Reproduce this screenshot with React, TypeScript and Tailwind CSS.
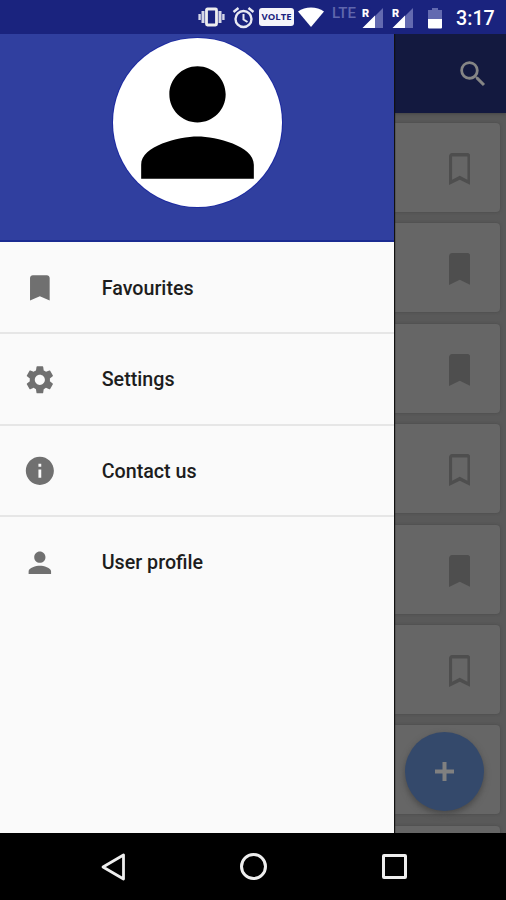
import clsx from "clsx";
import {
  MdBookmark,
  MdInfo,
  MdPerson,
  MdSearch,
  MdSettings,
} from "react-icons/md";

const menuItems = [
  { label: "Favourites", icon: MdBookmark },
  { label: "Settings", icon: MdSettings },
  { label: "Contact us", icon: MdInfo },
  { label: "User profile", icon: MdPerson },
];

const cards = [
  { id: 1, saved: false },
  { id: 2, saved: true },
  { id: 3, saved: true },
  { id: 4, saved: false },
  { id: 5, saved: true },
  { id: 6, saved: false },
];

function SignalIcon() {
  return (
    <svg className="h-[22px] w-[22px]" viewBox="0 0 22 22">
      <path d="M21 1v20H1z" fill="#636ab0" />
      <path d="M13 8.500V21H.5z" fill="#fff" />
      <path d="M0 0h8.500v9.500H0z" fill="#1a237e" />
      <text
        x="0"
        y="9.500"
        fill="#fff"
        fontSize="11"
        fontWeight="900"
        fontFamily="Roboto"
      >
        R
      </text>
    </svg>
  );
}

function StatusBar() {
  return (
    <header className="flex h-[34px] shrink-0 items-center bg-[#1a237e] pl-[198px] text-white">
      <svg className="h-[22px] w-[27px] shrink-0" viewBox="0 0 27 22">
        <rect x="8.500" y="3" width="10" height="16" rx="1" fill="none" stroke="#eee" strokeWidth="2.800" />
        <path d="M5 5v12M22 5v12" stroke="#d5d7e8" strokeWidth="3" />
        <path d="M1.600 8v6M25.400 8v6" stroke="#d5d7e8" strokeWidth="2.400" />
      </svg>
      <svg className="ml-[7px] h-[23px] w-[23px] shrink-0" viewBox="0 0 23 23" fill="none" stroke="#e8e9f3">
        <circle cx="11.500" cy="13" r="8" strokeWidth="2.400" />
        <path d="M1.500 6l5-4M21.500 6l-5-4" strokeWidth="2.400" />
        <path d="M11.500 8v5.500l4 2.500" strokeWidth="2" />
      </svg>
      <span className="ml-[4px] flex h-[18px] w-[35px] shrink-0 items-center justify-center rounded-[3px] bg-[#f5f5fa] font-['Open_Sans',sans-serif] text-[9.500px] font-bold text-[#1a237e]">
        VOLTE
      </span>
      <svg className="ml-[4px] h-[20px] w-[26px] shrink-0" viewBox="0 0 26 20">
        <path d="M0 4.500C7-1 19-1 26 4.500L13 20z" fill="#fff" />
      </svg>
      <span className="ml-[8px] w-[27px] shrink-0 pb-[7px] text-[15px] leading-none font-medium text-[#6067ad]">
        LTE
      </span>
      <div className="ml-[3px] flex shrink-0 gap-[8px] pt-px">
        <SignalIcon />
        <SignalIcon />
      </div>
      <svg className="mt-[2px] ml-[14px] h-[21px] w-[14px] shrink-0" viewBox="0 0 14 21">
        <path d="M4 0h6v2h4v9H0V2h4z" fill="#636ab0" />
        <path d="M0 11h14v8.500a1 1 0 0 1-1 1H1a1 1 0 0 1-1-1z" fill="#fff" />
      </svg>
      <span className="ml-[14px] pt-[3px] text-[19.700px] font-medium leading-none">
        3:17
      </span>
    </header>
  );
}

function Drawer() {
  return (
    <aside className="z-10 flex w-[394px] shrink-0 flex-col bg-[#fafafa] shadow-[1px_0_1px_#111]">
      <div className="flex h-[208px] shrink-0 justify-center border-b-2 border-[#1a2b91] bg-[#303f9f] pt-[4px]">
        <div className="size-[169px] rounded-full bg-white ring-1 ring-[#1c2aa0]">
          <MdPerson className="size-full text-black" />
        </div>
      </div>
      <nav className="pt-px">
        {menuItems.map(({ label, icon: Icon }, index) => (
          <a
            key={label}
            className={clsx(
              "flex h-[91.4px] items-center border-b-2 pt-px pl-[23px]",
              index < menuItems.length - 1
                ? "border-[#e6e6e6]"
                : "border-transparent",
            )}
          >
            <Icon className="size-[33.700px] text-[#707070]" />
            <span className="ml-[45px] pt-px text-[19.700px] font-medium text-[#1d1d1d]">
              {label}
            </span>
          </a>
        ))}
      </nav>
    </aside>
  );
}

function BookmarkIcon({ saved }: { saved: boolean }) {
  return (
    <svg
      className="h-[32px] w-[21.500px] text-[#4e4e4e]"
      viewBox="5 3 14 18"
      preserveAspectRatio="none"
      fill="currentColor"
    >
      {saved ? (
        <path d="M17 3H7c-1.100 0-2 .9-2 2v16l7-3 7 3V5c0-1.100-.9-2-2-2z" />
      ) : (
        <path d="M17 3H7c-1.100 0-2 .9-2 2v16l7-3 7 3V5c0-1.100-.9-2-2-2zm0 15l-5-2.180L7 18V5h10v13z" />
      )}
    </svg>
  );
}

function Content() {
  return (
    <main className="relative flex min-w-0 flex-1 flex-col overflow-hidden bg-[#595959]">
      <div className="flex h-[79px] shrink-0 items-center justify-end bg-[#13193f] pr-[16px] shadow-[0_1px_3px_#444]">
        <MdSearch className="size-[34px] text-[#858585]" />
      </div>
      <div className="flex flex-col gap-[11.400px] pt-[10px] pr-[6.500px]">
        {cards.map((card) => (
          <div
            key={card.id}
            className="flex h-[89px] shrink-0 items-center justify-end rounded-r-[4px] bg-[#666] pt-[3px] pr-[29.500px] shadow-[0_0_3px_#484848]"
          >
            <BookmarkIcon saved={card.saved} />
          </div>
        ))}
        <div className="h-[89px] shrink-0 rounded-r-[4px] bg-[#666] shadow-[0_0_3px_#484848]" />
        <div className="h-[89px] shrink-0 rounded-r-[4px] bg-[#666] shadow-[0_0_3px_#484848]" />
      </div>
      <button className="absolute right-[22px] bottom-[22.500px] flex size-[79px] items-center justify-center rounded-full bg-[#34496b] shadow-[0_3px_6px_#484848]">
        <svg className="size-[19px]" viewBox="0 0 19 19">
          <path d="M9.500 0v19M0 9.500h19" stroke="#808080" strokeWidth="4" />
        </svg>
      </button>
    </main>
  );
}

function NavigationBar() {
  return (
    <footer className="flex h-[67px] shrink-0 items-center justify-between bg-black pr-[99px] pl-[100px]">
      <svg className="size-[28px]" viewBox="0 0 28 28">
        <path d="M3 14L23.500 2v24z" fill="none" stroke="#eee" strokeWidth="2.800" strokeLinejoin="round" />
      </svg>
      <div className="mr-[4px] size-[27px] rounded-full border-3 border-[#eee]" />
      <div className="size-[25px] rounded-[2px] border-3 border-[#eee]" />
    </footer>
  );
}

export default function App() {
  return (
    <div className="flex h-[900px] w-[506px] flex-col overflow-hidden bg-black font-[Roboto,sans-serif]">
      <StatusBar />
      <div className="flex h-[799px] overflow-hidden">
        <Drawer />
        <Content />
      </div>
      <NavigationBar />
    </div>
  );
}
